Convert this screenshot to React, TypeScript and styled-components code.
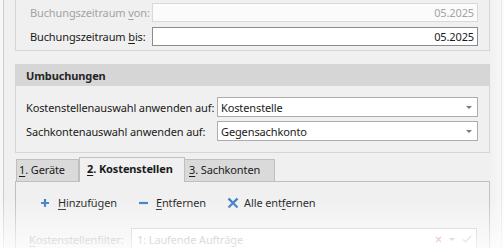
import React from 'react';
import styled, { createGlobalStyle } from 'styled-components';

const GlobalStyle = createGlobalStyle`
  html, body {
    margin: 0;
    padding: 0;
  }
  body {
    font-family: 'Noto Sans', 'Segoe UI', sans-serif;
    font-size: 11px;
    letter-spacing: -0.12px;
    color: #1a1a1a;
    background: #f7f7f7;
  }
  * {
    box-sizing: border-box;
  }
`;

const Screen = styled.div`
  position: relative;
  width: 504px;
  height: 248px;
  overflow: hidden;
  background: #f7f7f7;
`;

const Window = styled.div`
  margin-left: 3px;
  width: 499px;
  height: 100%;
  border-left: 1px solid #cdcdcd;
  border-right: 1px solid #cdcdcd;
  background: #f0f0f0;
  padding: 0 11px;
  display: flex;
  flex-direction: column;
`;

const PeriodGroup = styled.div`
  border: 1px solid #d5d5d5;
  border-top: none;
  padding: 3px 11px 4px 14px;
  display: flex;
  flex-direction: column;
  gap: 5px;
`;

const FieldRow = styled.div<{ $labelWidth: number }>`
  display: grid;
  grid-template-columns: ${(p) => p.$labelWidth}px 1fr;
  align-items: center;
`;

const Label = styled.label<{ $disabled?: boolean }>`
  color: ${(p) => (p.$disabled ? '#a3a3a3' : '#1a1a1a')};
  white-space: nowrap;
  line-height: 19px;

  u {
    text-underline-offset: 2px;
  }
`;

const TextBox = styled.div<{ $disabled?: boolean }>`
  height: 19px;
  background: ${(p) => (p.$disabled ? '#fbfbfb' : '#fff')};
  border: 1px solid ${(p) => (p.$disabled ? '#d9d9d9' : '#8c8c8c')};
  color: ${(p) => (p.$disabled ? '#a3a3a3' : '#1a1a1a')};
  text-align: right;
  padding: 0 3px;
  line-height: 17px;
`;

const Group = styled.div`
  margin-top: 13px;
  border: 1px solid #d5d5d5;
`;

const GroupHeader = styled.div`
  height: 21px;
  background: #d6d6d6;
  font-weight: 700;
  padding-left: 10px;
  line-height: 21px;
  color: #262626;
`;

const GroupBody = styled.div`
  padding: 11px 11px 11px 10px;
  display: flex;
  flex-direction: column;
  gap: 4px;
`;

const Select = styled.div`
  height: 20px;
  background: #fff;
  border: 1px solid #adadad;
  display: flex;
  align-items: center;
  justify-content: space-between;
  padding: 0 5px 0 3px;
`;

const Caret = styled.span<{ $color?: string }>`
  width: 0;
  height: 0;
  border-left: 3px solid transparent;
  border-right: 3px solid transparent;
  border-top: 3px solid ${(p) => p.$color || '#7a7a7a'};
`;

const TabStrip = styled.div`
  margin-top: 4px;
  height: 24px;
  display: flex;
  align-items: flex-end;
  padding-left: 1px;
  position: relative;
  z-index: 1;
`;

const Tab = styled.div<{ $active?: boolean; $width: number; $pad: number; $noLeft?: boolean }>`
  width: ${(p) => p.$width}px;
  height: ${(p) => (p.$active ? 25 : 22)}px;
  margin-bottom: ${(p) => (p.$active ? -1 : 0)}px;
  background: ${(p) => (p.$active ? '#f0f0f0' : '#dadada')};
  border: 1px solid #bfbfbf;
  border-bottom: none;
  border-left-width: ${(p) => (p.$noLeft ? 0 : 1)}px;
  font-weight: ${(p) => (p.$active ? 700 : 400)};
  padding-left: ${(p) => p.$pad}px;
  line-height: ${(p) => (p.$active ? 22 : 20)}px;
  white-space: nowrap;
  color: #1a1a1a;

  u {
    text-underline-offset: 2px;
  }
`;

const Panel = styled.div`
  flex: 1;
  border: 1px solid #bfbfbf;
  border-bottom: none;
  padding: 12px 12px 0 13px;
`;

const Toolbar = styled.div`
  display: flex;
  align-items: center;
  gap: 21px;
  padding-left: 11px;
  height: 18px;
`;

const ToolButton = styled.div<{ $gap: number }>`
  display: flex;
  align-items: center;
  gap: ${(p) => p.$gap}px;
  white-space: nowrap;
  line-height: 18px;

  u {
    text-underline-offset: 2px;
  }
`;

const FilterRow = styled(FieldRow)`
  margin-top: 16px;
`;

const FilterBox = styled.div`
  height: 22px;
  background: #fff;
  border: 1px solid #c6c6c6;
  display: flex;
  align-items: center;
  justify-content: space-between;
  padding: 0 4px 0 5px;
  color: #9a9a9a;
`;

const FilterIcons = styled.div`
  display: flex;
  align-items: center;
  gap: 7px;
`;

const Fade = styled.div`
  position: absolute;
  inset: 0;
  pointer-events: none;
  background:
    linear-gradient(to bottom, rgba(255, 255, 255, 0) 80%, rgba(255, 255, 255, 0.75) 100%),
    linear-gradient(to right, rgba(255, 255, 255, 0) 97%, rgba(255, 255, 255, 0.6) 100%);
`;

const blue = '#3d7cc9';

const PlusIcon = () => (
  <svg width="10" height="10" viewBox="0 0 10 10">
    <path d="M5 1v8M1 5h8" stroke={blue} strokeWidth="2.2" />
  </svg>
);

const MinusIcon = () => (
  <svg width="11" height="10" viewBox="0 0 11 10">
    <path d="M1 5h9" stroke={blue} strokeWidth="2.2" />
  </svg>
);

const CrossIcon = () => (
  <svg width="12" height="12" viewBox="0 0 12 12">
    <path d="M1.5 1.5l9 9M10.5 1.5l-9 9" stroke={blue} strokeWidth="2.4" />
  </svg>
);

const SmallCross = () => (
  <svg width="7" height="7" viewBox="0 0 7 7">
    <path d="M1 1l5 5M6 1L1 6" stroke="#e07a7a" strokeWidth="1.2" />
  </svg>
);

const Check = () => (
  <svg width="10" height="8" viewBox="0 0 10 8">
    <path d="M1 4.5l2.5 2.5L9 1" stroke="#9cc2e6" strokeWidth="1.2" fill="none" />
  </svg>
);

export default function App() {
  return (
    <>
      <GlobalStyle />
      <Screen>
        <Window>
          <PeriodGroup>
            <FieldRow $labelWidth={122}>
              <Label $disabled>
                Buchungszeitraum <u>v</u>on:
              </Label>
              <TextBox $disabled>05.2025</TextBox>
            </FieldRow>
            <FieldRow $labelWidth={122}>
              <Label>
                Buchungszeitraum <u>b</u>is:
              </Label>
              <TextBox>05.2025</TextBox>
            </FieldRow>
          </PeriodGroup>

          <Group>
            <GroupHeader>Umbuchungen</GroupHeader>
            <GroupBody>
              <FieldRow $labelWidth={191}>
                <Label>Kostenstellenauswahl anwenden auf:</Label>
                <Select>
                  <span>Kostenstelle</span>
                  <Caret />
                </Select>
              </FieldRow>
              <FieldRow $labelWidth={191}>
                <Label>Sachkontenauswahl anwenden auf:</Label>
                <Select>
                  <span>Gegensachkonto</span>
                  <Caret />
                </Select>
              </FieldRow>
            </GroupBody>
          </Group>

          <TabStrip>
            <Tab $width={63} $pad={2}>
              <u>1</u>. Geräte
            </Tab>
            <Tab $width={106} $pad={7} $active>
              <u>2</u>. Kostenstellen
            </Tab>
            <Tab $width={90} $pad={4} $noLeft>
              <u>3</u>. Sachkonten
            </Tab>
          </TabStrip>

          <Panel>
            <Toolbar>
              <ToolButton $gap={8}>
                <PlusIcon />
                <span>
                  <u>H</u>inzufügen
                </span>
              </ToolButton>
              <ToolButton $gap={7}>
                <MinusIcon />
                <span>
                  <u>E</u>ntfernen
                </span>
              </ToolButton>
              <ToolButton $gap={5}>
                <CrossIcon />
                <span>
                  Alle ent<u>f</u>ernen
                </span>
              </ToolButton>
            </Toolbar>

            <FilterRow $labelWidth={102}>
              <Label $disabled>
                <u>K</u>ostenstellenfilter:
              </Label>
              <FilterBox>
                <span>1: Laufende Aufträge</span>
                <FilterIcons>
                  <SmallCross />
                  <Caret $color="#a8a8a8" />
                  <Check />
                </FilterIcons>
              </FilterBox>
            </FilterRow>
          </Panel>
        </Window>
        <Fade />
      </Screen>
    </>
  );
}
